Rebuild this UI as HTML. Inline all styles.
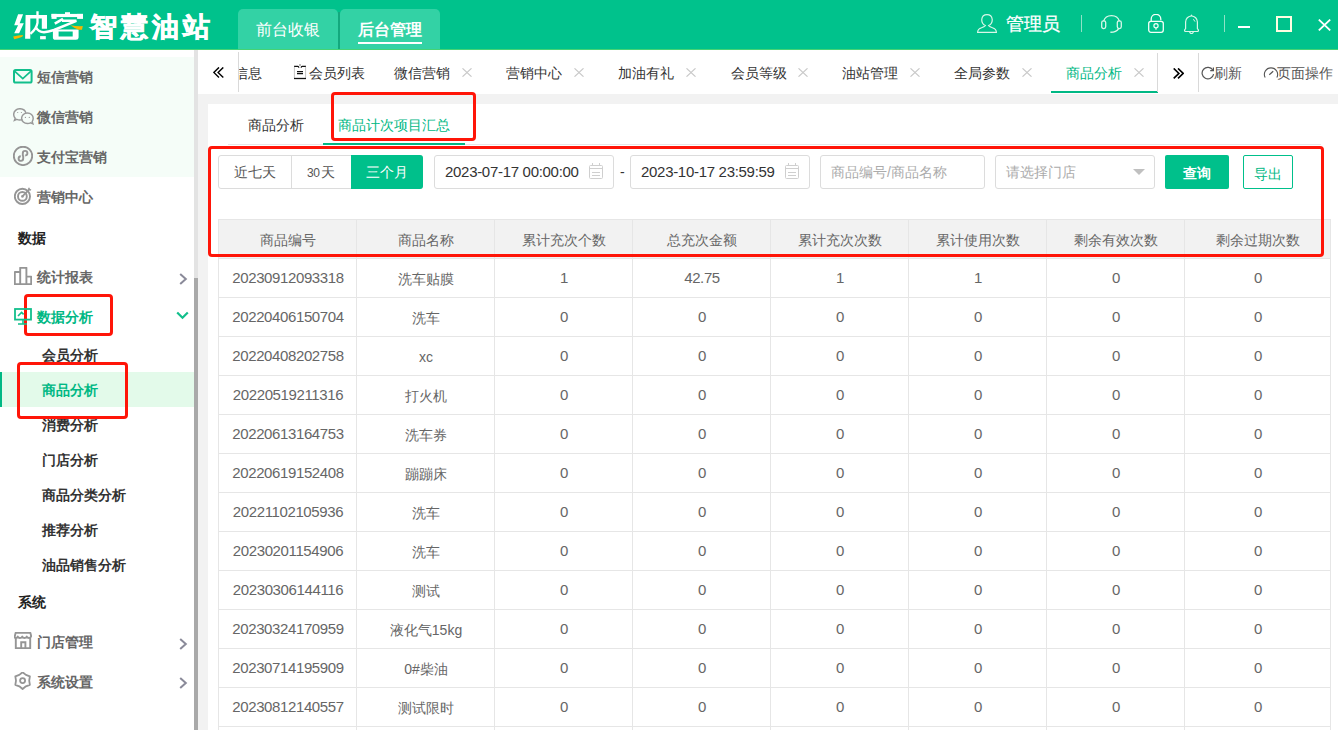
<!DOCTYPE html>
<html><head><meta charset="utf-8">
<style>
*{margin:0;padding:0;box-sizing:border-box}
html,body{width:1338px;height:730px;overflow:hidden;background:#fff;font-family:"Liberation Sans",sans-serif;font-size:14px;color:#333}
.a{position:absolute;white-space:nowrap}
#hdr{position:absolute;left:0;top:0;width:1338px;height:50px;background:#00C28C;border-bottom:1px solid #45D374}
.htab{position:absolute;top:9px;height:40px;background:#33D2A5;border-radius:5px 5px 0 0;color:#fff;font-size:16px;text-align:center;line-height:42px}
#side{position:absolute;left:0;top:50px;width:194px;height:680px;background:#fff}
.si{position:absolute;left:37px;font-size:14px;font-weight:bold;color:#666;line-height:16px}
.ss{position:absolute;left:42px;font-size:14px;font-weight:bold;color:#333;line-height:16px}
.sh{position:absolute;left:18px;font-size:14px;font-weight:bold;color:#222;line-height:16px}
.ic{position:absolute}
#tabs{position:absolute;left:198px;top:50px;width:1140px;height:44px;background:#fff}
.tt{position:absolute;top:15px;font-size:14px;color:#333;line-height:16px}
.tx{position:absolute;top:67px;width:10px;height:10px}
.red{position:absolute;border:3px solid #FF1508;border-radius:4px}
.cell{position:absolute;text-align:center;color:#666;font-size:14px;line-height:16px}
.num{font-size:15px;letter-spacing:-0.38px}
</style></head><body>

<!-- HEADER -->
<div id="hdr">
  <svg class="a" style="left:0;top:0" width="90" height="48" viewBox="0 0 90 48">
  <path d="M18.1 14.2 L23.1 14.2 L19.6 23.3 L23.8 23.3 L19.1 33.2 L14.2 33.2 L18.1 25.2 L14.2 25.2 Z" fill="#fff"/>
  <path d="M13.2 36.4 Q18 35.2 23.1 35.1 L22.3 36.8 Q18 38.6 14.2 39.2 Z" fill="#F7B500"/>
  <path d="M25.6 14.9 H47 V28.7 H41.8 V18.4 H30.3 V38.8 H25.1 Z" fill="#fff"/>
  <path d="M37.5 11.2 V22.8 Q36.5 29 30.4 33.8" fill="none" stroke="#fff" stroke-width="2.3"/>
  <path d="M36 27.5 Q38.5 32.2 44 32.2 Q48 32 54 30 L76.4 20.8 H62" fill="none" stroke="#fff" stroke-width="2.5"/>
  <rect x="40.1" y="36.1" width="5.7" height="3.2" fill="#fff"/>
  <rect x="51.5" y="13.9" width="31.5" height="3.2" fill="#fff"/>
  <rect x="51.5" y="13.9" width="5.1" height="5" fill="#fff"/>
  <rect x="77.1" y="13.9" width="5.9" height="5" fill="#fff"/>
  <rect x="65" y="12.2" width="5" height="2.2" fill="#fff"/>
  <path d="M54.8 23.6 L63 18.8" stroke="#fff" stroke-width="2.6"/>
  <path d="M52.9 29.6 H78.6 V37.5 Q78.6 39.8 76 39.8 H55.5 Q52.9 39.8 52.9 37.5 Z M58.6 31.4 V36.6 H72.7 V31.4 Z" fill="#fff" fill-rule="evenodd"/>
  <path d="M70.4 25.3 Q76 26.4 82.8 26.1 L82 29.8 L78.6 29.8 Q74 28 70.4 25.3 Z" fill="#F7B500"/>
</svg>
  <div class="a" style="left:90px;top:9px;font-size:27px;font-weight:900;color:#fff;line-height:36px;letter-spacing:4px;-webkit-text-stroke:0.7px #fff">智慧油站</div>
  <div class="htab" style="left:238px;width:100px">前台收银</div>
  <div class="a" style="left:338px;top:12px;width:2px;height:37px;background:#13A97E"></div>
  <div class="htab" style="left:340px;width:100px;font-weight:bold">后台管理</div>
  <div class="a" style="left:358px;top:42px;width:64px;height:2px;background:#fff"></div>
</div>


<!-- SIDEBAR -->
<div id="side">
  <div class="a" style="left:0;top:7px;width:194px;height:120px;background:#F5FDF8"></div>
  <div class="a" style="left:0;top:322px;width:194px;height:35px;background:#E3FAEA"></div>
  <div class="a" style="left:0;top:322px;width:2px;height:35px;background:#00B884"></div>
</div>
<div class="a" style="left:194px;top:50px;width:4px;height:680px;background:#E3E3E3"></div>
<div class="a" style="left:194px;top:278px;width:4px;height:452px;background:#A9A9A9"></div>
<div class="si" style="top:69px">短信营销</div>
<div class="si" style="top:109px">微信营销</div>
<div class="si" style="top:149px">支付宝营销</div>
<div class="si" style="top:189px">营销中心</div>
<div class="sh" style="top:230px">数据</div>
<div class="si" style="top:269px">统计报表</div>
<div class="si" style="top:309px;color:#00B884">数据分析</div>
<div class="ss" style="top:347px">会员分析</div>
<div class="ss" style="top:382px;color:#00B884">商品分析</div>
<div class="ss" style="top:417px">消费分析</div>
<div class="ss" style="top:452px">门店分析</div>
<div class="ss" style="top:487px">商品分类分析</div>
<div class="ss" style="top:522px">推荐分析</div>
<div class="ss" style="top:557px">油品销售分析</div>
<div class="sh" style="top:594px">系统</div>
<div class="si" style="top:634px">门店管理</div>
<div class="si" style="top:674px">系统设置</div>
<div class="red" style="left:24px;top:294px;width:89px;height:42px"></div>
<div class="red" style="left:17px;top:362px;width:111px;height:57px"></div>

<!-- TABS BAR -->
<div class="a" style="left:198px;top:94px;width:1140px;height:636px;background:#F2F2F2"></div>
<div class="a" style="left:208px;top:104px;width:1130px;height:626px;background:#fff"></div>
<div class="a" style="left:238px;top:52px;width:1px;height:40px;background:#D9D9D9"></div>
<div class="a" style="left:239px;top:50px;width:918px;height:44px;overflow:hidden">
  <div class="tt" style="left:-5px">信息</div>
  <div class="tt" style="left:70px">会员列表</div>
  <div class="tt" style="left:155px">微信营销</div>
  <div class="tt" style="left:267px">营销中心</div>
  <div class="tt" style="left:379px">加油有礼</div>
  <div class="tt" style="left:492px">会员等级</div>
  <div class="tt" style="left:603px">油站管理</div>
  <div class="tt" style="left:715px">全局参数</div>
  <div class="tt" style="left:827px;color:#00B884">商品分析</div>
</div>
<div class="a" style="left:1051px;top:91px;width:107px;height:2px;background:#00B884"></div>
<div class="a" style="left:1157px;top:53px;width:1px;height:39px;background:#D9D9D9"></div>
<div class="a" style="left:1198px;top:53px;width:1px;height:39px;background:#D9D9D9"></div>
<div class="a" style="left:1214px;top:65px;font-size:14px;line-height:16px;color:#555">刷新</div>
<div class="a" style="left:1277px;top:65px;font-size:14px;line-height:16px;color:#555">页面操作</div>

<!-- SUBTABS -->
<div class="a" style="left:228px;top:144px;width:1093px;height:1px;background:#E6E6E6"></div>
<div class="a" style="left:248px;top:117px;font-size:14px;line-height:16px;color:#333">商品分析</div>
<div class="a" style="left:338px;top:117px;font-size:14px;line-height:16px;color:#00B884">商品计次项目汇总</div>
<div class="a" style="left:323px;top:143px;width:142px;height:2px;background:#00B884"></div>
<div class="red" style="left:331px;top:92px;width:145px;height:49px"></div>


<!-- FILTER -->
<div class="a" style="left:218px;top:155px;width:205px;height:34px;border:1px solid #DCDCDC;border-radius:3px;background:#fff"></div>
<div class="a" style="left:291px;top:156px;width:1px;height:32px;background:#DCDCDC"></div>
<div class="a" style="left:351px;top:155px;width:72px;height:34px;background:#00C08B;border-radius:0 3px 3px 0"></div>
<div class="a" style="left:234px;top:164px;font-size:14px;line-height:16px;color:#555">近七天</div>
<div class="a" style="left:307px;top:164px;font-size:14px;line-height:16px;color:#555"><span style="font-size:12px;letter-spacing:-0.5px;margin-right:1.5px">30</span>天</div>
<div class="a" style="left:366px;top:164px;font-size:14px;line-height:16px;color:#fff">三个月</div>
<div class="a" style="left:434px;top:155px;width:180px;height:34px;border:1px solid #DCDCDC;border-radius:3px"></div>
<div class="a" style="left:445px;top:164px;font-size:15px;letter-spacing:-0.3px;line-height:16px;color:#333">2023-07-17 00:00:00</div>
<div class="a" style="left:589px;top:163px"><svg width="14" height="16" viewBox="0 0 14 16"><rect x="0.5" y="2.5" width="13" height="13" rx="1" fill="none" stroke="#CFCFCF"/><line x1="0.5" y1="5.5" x2="13.5" y2="5.5" stroke="#CFCFCF"/><line x1="3.5" y1="0" x2="3.5" y2="3" stroke="#CFCFCF"/><line x1="10.5" y1="0" x2="10.5" y2="3" stroke="#CFCFCF"/><line x1="3" y1="9.5" x2="11" y2="9.5" stroke="#CFCFCF"/><line x1="3" y1="12.5" x2="11" y2="12.5" stroke="#CFCFCF"/></svg></div>
<div class="a" style="left:620px;top:164px;font-size:14px;line-height:16px;color:#333">-</div>
<div class="a" style="left:630px;top:155px;width:180px;height:34px;border:1px solid #DCDCDC;border-radius:3px"></div>
<div class="a" style="left:641px;top:164px;font-size:15px;letter-spacing:-0.3px;line-height:16px;color:#333">2023-10-17 23:59:59</div>
<div class="a" style="left:785px;top:163px"><svg width="14" height="16" viewBox="0 0 14 16"><rect x="0.5" y="2.5" width="13" height="13" rx="1" fill="none" stroke="#CFCFCF"/><line x1="0.5" y1="5.5" x2="13.5" y2="5.5" stroke="#CFCFCF"/><line x1="3.5" y1="0" x2="3.5" y2="3" stroke="#CFCFCF"/><line x1="10.5" y1="0" x2="10.5" y2="3" stroke="#CFCFCF"/><line x1="3" y1="9.5" x2="11" y2="9.5" stroke="#CFCFCF"/><line x1="3" y1="12.5" x2="11" y2="12.5" stroke="#CFCFCF"/></svg></div>
<div class="a" style="left:820px;top:155px;width:165px;height:34px;border:1px solid #DCDCDC;border-radius:3px"></div>
<div class="a" style="left:831px;top:164px;font-size:14px;line-height:16px;color:#ABABAB">商品编号/商品名称</div>
<div class="a" style="left:995px;top:155px;width:160px;height:34px;border:1px solid #DCDCDC;border-radius:3px"></div>
<div class="a" style="left:1006px;top:164px;font-size:14px;line-height:16px;color:#ABABAB">请选择门店</div>
<svg class="a" style="left:1133px;top:169px" width="12" height="6" viewBox="0 0 12 6"><path d="M0 0 L12 0 L6 6 Z" fill="#C0C0C0"/></svg>
<div class="a" style="left:1165px;top:155px;width:64px;height:34px;background:#00C08B;border-radius:2px;color:#fff;font-weight:bold;text-align:center;line-height:36px;font-size:14px">查询</div>
<div class="a" style="left:1243px;top:155px;width:50px;height:34px;border:1px solid #00C08B;border-radius:2px;color:#00B884;text-align:center;line-height:33px;font-size:14px;padding-top:2px">导出</div>
<!-- TABLE -->
<div class="a" style="left:218px;top:219px;width:1112px;height:39px;background:#F2F2F2"></div>
<div class="a" style="left:218px;top:219px;width:1113px;height:1px;background:#E6E6E6"></div>
<div class="a" style="left:218px;top:258px;width:1113px;height:1px;background:#E6E6E6"></div>
<div class="a" style="left:218px;top:297px;width:1113px;height:1px;background:#E6E6E6"></div>
<div class="a" style="left:218px;top:336px;width:1113px;height:1px;background:#E6E6E6"></div>
<div class="a" style="left:218px;top:375px;width:1113px;height:1px;background:#E6E6E6"></div>
<div class="a" style="left:218px;top:414px;width:1113px;height:1px;background:#E6E6E6"></div>
<div class="a" style="left:218px;top:453px;width:1113px;height:1px;background:#E6E6E6"></div>
<div class="a" style="left:218px;top:492px;width:1113px;height:1px;background:#E6E6E6"></div>
<div class="a" style="left:218px;top:531px;width:1113px;height:1px;background:#E6E6E6"></div>
<div class="a" style="left:218px;top:570px;width:1113px;height:1px;background:#E6E6E6"></div>
<div class="a" style="left:218px;top:609px;width:1113px;height:1px;background:#E6E6E6"></div>
<div class="a" style="left:218px;top:648px;width:1113px;height:1px;background:#E6E6E6"></div>
<div class="a" style="left:218px;top:687px;width:1113px;height:1px;background:#E6E6E6"></div>
<div class="a" style="left:218px;top:726px;width:1113px;height:1px;background:#E6E6E6"></div>
<div class="a" style="left:218px;top:219px;width:1px;height:511px;background:#E6E6E6"></div>
<div class="a" style="left:356px;top:219px;width:1px;height:511px;background:#E6E6E6"></div>
<div class="a" style="left:494px;top:219px;width:1px;height:511px;background:#E6E6E6"></div>
<div class="a" style="left:632px;top:219px;width:1px;height:511px;background:#E6E6E6"></div>
<div class="a" style="left:770px;top:219px;width:1px;height:511px;background:#E6E6E6"></div>
<div class="a" style="left:908px;top:219px;width:1px;height:511px;background:#E6E6E6"></div>
<div class="a" style="left:1046px;top:219px;width:1px;height:511px;background:#E6E6E6"></div>
<div class="a" style="left:1184px;top:219px;width:1px;height:511px;background:#E6E6E6"></div>
<div class="a" style="left:1330px;top:219px;width:1px;height:511px;background:#E6E6E6"></div>
<div class="cell" style="left:219px;top:232px;width:138px">商品编号</div>
<div class="cell" style="left:357px;top:232px;width:138px">商品名称</div>
<div class="cell" style="left:495px;top:232px;width:138px">累计充次个数</div>
<div class="cell" style="left:633px;top:232px;width:138px">总充次金额</div>
<div class="cell" style="left:771px;top:232px;width:138px">累计充次次数</div>
<div class="cell" style="left:909px;top:232px;width:138px">累计使用次数</div>
<div class="cell" style="left:1047px;top:232px;width:138px">剩余有效次数</div>
<div class="cell" style="left:1185px;top:232px;width:146px">剩余过期次数</div>
<div class="cell num" style="left:219px;top:270px;width:138px">20230912093318</div>
<div class="cell" style="left:357px;top:271px;width:138px">洗车贴膜</div>
<div class="cell num" style="left:495px;top:270px;width:138px">1</div>
<div class="cell num" style="left:633px;top:270px;width:138px">42.75</div>
<div class="cell num" style="left:771px;top:270px;width:138px">1</div>
<div class="cell num" style="left:909px;top:270px;width:138px">1</div>
<div class="cell num" style="left:1047px;top:270px;width:138px">0</div>
<div class="cell num" style="left:1185px;top:270px;width:146px">0</div>
<div class="cell num" style="left:219px;top:309px;width:138px">20220406150704</div>
<div class="cell" style="left:357px;top:310px;width:138px">洗车</div>
<div class="cell num" style="left:495px;top:309px;width:138px">0</div>
<div class="cell num" style="left:633px;top:309px;width:138px">0</div>
<div class="cell num" style="left:771px;top:309px;width:138px">0</div>
<div class="cell num" style="left:909px;top:309px;width:138px">0</div>
<div class="cell num" style="left:1047px;top:309px;width:138px">0</div>
<div class="cell num" style="left:1185px;top:309px;width:146px">0</div>
<div class="cell num" style="left:219px;top:348px;width:138px">20220408202758</div>
<div class="cell" style="left:357px;top:349px;width:138px">xc</div>
<div class="cell num" style="left:495px;top:348px;width:138px">0</div>
<div class="cell num" style="left:633px;top:348px;width:138px">0</div>
<div class="cell num" style="left:771px;top:348px;width:138px">0</div>
<div class="cell num" style="left:909px;top:348px;width:138px">0</div>
<div class="cell num" style="left:1047px;top:348px;width:138px">0</div>
<div class="cell num" style="left:1185px;top:348px;width:146px">0</div>
<div class="cell num" style="left:219px;top:387px;width:138px">20220519211316</div>
<div class="cell" style="left:357px;top:388px;width:138px">打火机</div>
<div class="cell num" style="left:495px;top:387px;width:138px">0</div>
<div class="cell num" style="left:633px;top:387px;width:138px">0</div>
<div class="cell num" style="left:771px;top:387px;width:138px">0</div>
<div class="cell num" style="left:909px;top:387px;width:138px">0</div>
<div class="cell num" style="left:1047px;top:387px;width:138px">0</div>
<div class="cell num" style="left:1185px;top:387px;width:146px">0</div>
<div class="cell num" style="left:219px;top:426px;width:138px">20220613164753</div>
<div class="cell" style="left:357px;top:427px;width:138px">洗车券</div>
<div class="cell num" style="left:495px;top:426px;width:138px">0</div>
<div class="cell num" style="left:633px;top:426px;width:138px">0</div>
<div class="cell num" style="left:771px;top:426px;width:138px">0</div>
<div class="cell num" style="left:909px;top:426px;width:138px">0</div>
<div class="cell num" style="left:1047px;top:426px;width:138px">0</div>
<div class="cell num" style="left:1185px;top:426px;width:146px">0</div>
<div class="cell num" style="left:219px;top:465px;width:138px">20220619152408</div>
<div class="cell" style="left:357px;top:466px;width:138px">蹦蹦床</div>
<div class="cell num" style="left:495px;top:465px;width:138px">0</div>
<div class="cell num" style="left:633px;top:465px;width:138px">0</div>
<div class="cell num" style="left:771px;top:465px;width:138px">0</div>
<div class="cell num" style="left:909px;top:465px;width:138px">0</div>
<div class="cell num" style="left:1047px;top:465px;width:138px">0</div>
<div class="cell num" style="left:1185px;top:465px;width:146px">0</div>
<div class="cell num" style="left:219px;top:504px;width:138px">20221102105936</div>
<div class="cell" style="left:357px;top:505px;width:138px">洗车</div>
<div class="cell num" style="left:495px;top:504px;width:138px">0</div>
<div class="cell num" style="left:633px;top:504px;width:138px">0</div>
<div class="cell num" style="left:771px;top:504px;width:138px">0</div>
<div class="cell num" style="left:909px;top:504px;width:138px">0</div>
<div class="cell num" style="left:1047px;top:504px;width:138px">0</div>
<div class="cell num" style="left:1185px;top:504px;width:146px">0</div>
<div class="cell num" style="left:219px;top:543px;width:138px">20230201154906</div>
<div class="cell" style="left:357px;top:544px;width:138px">洗车</div>
<div class="cell num" style="left:495px;top:543px;width:138px">0</div>
<div class="cell num" style="left:633px;top:543px;width:138px">0</div>
<div class="cell num" style="left:771px;top:543px;width:138px">0</div>
<div class="cell num" style="left:909px;top:543px;width:138px">0</div>
<div class="cell num" style="left:1047px;top:543px;width:138px">0</div>
<div class="cell num" style="left:1185px;top:543px;width:146px">0</div>
<div class="cell num" style="left:219px;top:582px;width:138px">20230306144116</div>
<div class="cell" style="left:357px;top:583px;width:138px">测试</div>
<div class="cell num" style="left:495px;top:582px;width:138px">0</div>
<div class="cell num" style="left:633px;top:582px;width:138px">0</div>
<div class="cell num" style="left:771px;top:582px;width:138px">0</div>
<div class="cell num" style="left:909px;top:582px;width:138px">0</div>
<div class="cell num" style="left:1047px;top:582px;width:138px">0</div>
<div class="cell num" style="left:1185px;top:582px;width:146px">0</div>
<div class="cell num" style="left:219px;top:621px;width:138px">20230324170959</div>
<div class="cell" style="left:357px;top:622px;width:138px">液化气15kg</div>
<div class="cell num" style="left:495px;top:621px;width:138px">0</div>
<div class="cell num" style="left:633px;top:621px;width:138px">0</div>
<div class="cell num" style="left:771px;top:621px;width:138px">0</div>
<div class="cell num" style="left:909px;top:621px;width:138px">0</div>
<div class="cell num" style="left:1047px;top:621px;width:138px">0</div>
<div class="cell num" style="left:1185px;top:621px;width:146px">0</div>
<div class="cell num" style="left:219px;top:660px;width:138px">20230714195909</div>
<div class="cell" style="left:357px;top:661px;width:138px">0#柴油</div>
<div class="cell num" style="left:495px;top:660px;width:138px">0</div>
<div class="cell num" style="left:633px;top:660px;width:138px">0</div>
<div class="cell num" style="left:771px;top:660px;width:138px">0</div>
<div class="cell num" style="left:909px;top:660px;width:138px">0</div>
<div class="cell num" style="left:1047px;top:660px;width:138px">0</div>
<div class="cell num" style="left:1185px;top:660px;width:146px">0</div>
<div class="cell num" style="left:219px;top:699px;width:138px">20230812140557</div>
<div class="cell" style="left:357px;top:700px;width:138px">测试限时</div>
<div class="cell num" style="left:495px;top:699px;width:138px">0</div>
<div class="cell num" style="left:633px;top:699px;width:138px">0</div>
<div class="cell num" style="left:771px;top:699px;width:138px">0</div>
<div class="cell num" style="left:909px;top:699px;width:138px">0</div>
<div class="cell num" style="left:1047px;top:699px;width:138px">0</div>
<div class="cell num" style="left:1185px;top:699px;width:146px">0</div>
<div class="red" style="left:208px;top:146px;width:1116px;height:111px"></div>

<!-- HEADER ICONS -->
<svg class="a" style="left:977px;top:14px" width="20" height="19" viewBox="0 0 20 19"><path d="M8.3 11.6 C5.5 10 4.6 7.5 4.8 5.2 C5.1 2.3 7.4 0.6 10 0.6 C12.6 0.6 14.9 2.3 15.2 5.2 C15.4 7.5 14.5 10 11.7 11.6 C12.6 12.7 13.8 13.2 15.4 13.7 C18 14.5 19.4 16.3 19.4 18.4 L0.6 18.4 C0.6 16.3 2 14.5 4.6 13.7 C6.2 13.2 7.4 12.7 8.3 11.6 Z" fill="none" stroke="#D8F7E8" stroke-width="1.2"/></svg>
<div class="a" style="left:1006px;top:13px;font-size:18px;line-height:22px;color:#fff;-webkit-text-stroke:0.3px #fff">管理员</div>
<div class="a" style="left:1081px;top:15px;width:1px;height:17px;background:#8FE2C6"></div>
<svg class="a" style="left:1101px;top:14px" width="21" height="19" viewBox="0 0 21 19"><path d="M2.6 7.2 A8.2 7.6 0 0 1 18.4 7.2" fill="none" stroke="#D8F7E8" stroke-width="1.3"/><rect x="0.7" y="6.8" width="4" height="7.8" rx="1.8" fill="none" stroke="#D8F7E8" stroke-width="1.3"/><rect x="16.3" y="6.8" width="4" height="7.8" rx="1.8" fill="none" stroke="#D8F7E8" stroke-width="1.3"/><path d="M17.6 14.6 Q15.5 18.3 9.4 18.3" fill="none" stroke="#D8F7E8" stroke-width="1.4"/></svg>
<svg class="a" style="left:1148px;top:14px" width="16" height="19" viewBox="0 0 16 19"><rect x="0.7" y="7.4" width="14.6" height="10.9" rx="2.2" fill="none" stroke="#F4FFF8" stroke-width="1.3"/><path d="M3.2 7.4 V4.9 A4.8 4.6 0 0 1 12.8 4.9 V6.2" fill="none" stroke="#F4FFF8" stroke-width="1.3"/><circle cx="8" cy="11.7" r="2.1" fill="none" stroke="#F4FFF8" stroke-width="1.2"/><path d="M8 13.8 V15.8" stroke="#F4FFF8" stroke-width="1.2"/></svg>
<svg class="a" style="left:1184px;top:14px" width="15" height="20" viewBox="0 0 15 20"><path d="M7.5 0.3 L8.6 2 L6.4 2 Z" fill="#D8F7E8"/><path d="M1.6 14.5 V8 A5.9 6 0 0 1 13.4 8 V14.5 L14.4 16 Q14.6 17.5 13.2 17.5 L1.8 17.5 Q0.4 17.5 0.6 16 Z" fill="none" stroke="#D8F7E8" stroke-width="1.2"/><path d="M5.6 17.6 A1.9 1.9 0 0 0 9.4 17.6" fill="none" stroke="#D8F7E8" stroke-width="1.2"/><path d="M9.4 5.2 L11 7.6" stroke="#D8F7E8" stroke-width="1"/></svg>
<div class="a" style="left:1224px;top:15px;width:1px;height:17px;background:#8FE2C6"></div>
<div class="a" style="left:1238px;top:26px;width:12px;height:2px;background:#fff"></div>
<div class="a" style="left:1276px;top:16px;width:16px;height:16px;border:2px solid #FFFDE2"></div>
<svg class="a" style="left:1318px;top:19px" width="13" height="12" viewBox="0 0 13 12"><path d="M0.8 0.6 L12.2 11.4 M12.2 0.6 L0.8 11.4" stroke="#fff" stroke-width="1.8"/></svg>

<!-- TAB ICONS -->
<svg class="a" style="left:213px;top:67px" width="11" height="11" viewBox="0 0 11 11"><path d="M6 0.4 L0.8 5.4 L6 10.4 M10.3 0.4 L5.1 5.4 L10.3 10.4" fill="none" stroke="#000" stroke-width="1.4"/></svg>
<svg class="a" style="left:1173px;top:68px" width="11" height="11" viewBox="0 0 11 11"><path d="M0.7 0.4 L5.9 5.4 L0.7 10.4 M5 0.4 L10.2 5.4 L5 10.4" fill="none" stroke="#000" stroke-width="1.6"/></svg>
<svg class="a" style="left:293px;top:64px" width="14" height="16" viewBox="0 0 14 16"><path d="M1 2.3 H4.8 Q5.8 2.3 5.8 3.8 M8.2 3.8 Q8.2 2.3 9.2 2.3 H13" fill="none" stroke="#111" stroke-width="1.2"/><path d="M6.2 1 H7.8" stroke="#444" stroke-width="0.9"/><path d="M1.4 2.8 V14 M12.6 2.8 V14" stroke="#C4C4C4" stroke-width="1"/><path d="M1 14.5 H13" stroke="#111" stroke-width="1.3"/><path d="M4 7.6 H10 M4 9.6 H10" stroke="#111" stroke-width="1.1"/></svg>
<svg class="a" style="left:462px;top:68px" width="10" height="9" viewBox="0 0 10 9"><path d="M0.5 0.3 L9.5 8.7 M9.5 0.3 L0.5 8.7" stroke="#C8C8C8" stroke-width="1.1"/></svg>
<svg class="a" style="left:574px;top:68px" width="10" height="9" viewBox="0 0 10 9"><path d="M0.5 0.3 L9.5 8.7 M9.5 0.3 L0.5 8.7" stroke="#C8C8C8" stroke-width="1.1"/></svg>
<svg class="a" style="left:686px;top:68px" width="10" height="9" viewBox="0 0 10 9"><path d="M0.5 0.3 L9.5 8.7 M9.5 0.3 L0.5 8.7" stroke="#C8C8C8" stroke-width="1.1"/></svg>
<svg class="a" style="left:798px;top:68px" width="10" height="9" viewBox="0 0 10 9"><path d="M0.5 0.3 L9.5 8.7 M9.5 0.3 L0.5 8.7" stroke="#C8C8C8" stroke-width="1.1"/></svg>
<svg class="a" style="left:910px;top:68px" width="10" height="9" viewBox="0 0 10 9"><path d="M0.5 0.3 L9.5 8.7 M9.5 0.3 L0.5 8.7" stroke="#C8C8C8" stroke-width="1.1"/></svg>
<svg class="a" style="left:1022px;top:68px" width="10" height="9" viewBox="0 0 10 9"><path d="M0.5 0.3 L9.5 8.7 M9.5 0.3 L0.5 8.7" stroke="#C8C8C8" stroke-width="1.1"/></svg>
<svg class="a" style="left:1134px;top:68px" width="10" height="9" viewBox="0 0 10 9"><path d="M0.5 0.3 L9.5 8.7 M9.5 0.3 L0.5 8.7" stroke="#C8C8C8" stroke-width="1.1"/></svg>

<svg class="a" style="left:1201px;top:66px" width="14" height="14" viewBox="0 0 14 14"><path d="M11.8 4 A5.8 5.8 0 1 0 12.6 8.2" fill="none" stroke="#555" stroke-width="1.2"/><path d="M12.4 1.4 V4.6 H9.2" fill="none" stroke="#555" stroke-width="1.2"/></svg>
<svg class="a" style="left:1263px;top:66px" width="16" height="13" viewBox="0 0 16 13"><path d="M2.2 11.6 A6.6 6.6 0 1 1 13.8 11.6" fill="none" stroke="#555" stroke-width="1.1"/><path d="M6.3 8.8 L10.2 5.2" stroke="#555" stroke-width="1.2"/></svg>

<!-- SIDEBAR ICONS -->
<svg class="a" style="left:13px;top:69px" width="20" height="15" viewBox="0 0 20 15"><rect x="1" y="1" width="17.6" height="12.6" rx="1.6" fill="none" stroke="#12BF8C" stroke-width="2"/><path d="M1.6 2.2 L9.8 9.6 L18 2.2" fill="none" stroke="#12BF8C" stroke-width="1.7"/></svg>
<svg class="a" style="left:13px;top:108px" width="21" height="17" viewBox="0 0 21 17"><path d="M9.5 11.6 Q8.2 12 6.8 12 Q5.2 12 3.8 11.4 L1.4 12.4 L2.2 10.2 Q0.7 8.6 0.7 6.4 C0.7 3.2 3.5 0.7 6.9 0.7 C9.8 0.7 12.2 2.5 12.9 4.9" fill="none" stroke="#999" stroke-width="1.45"/><path d="M19.2 13.6 L19.9 15.8 L17.6 14.8 Q16.2 15.5 14.4 15.5 C11.2 15.5 8.6 13.2 8.6 10.2 C8.6 7.2 11.2 4.9 14.4 4.9 C17.6 4.9 20.2 7.2 20.2 10.2 Q20.2 12.1 19.2 13.6 Z" fill="none" stroke="#999" stroke-width="1.45"/><circle cx="4.7" cy="4.5" r="0.6" fill="#999"/><circle cx="8.4" cy="4.5" r="0.6" fill="#999"/><circle cx="12.4" cy="9.4" r="0.6" fill="#999"/><circle cx="16.3" cy="9.4" r="0.6" fill="#999"/></svg>
<svg class="a" style="left:13px;top:146px" width="20" height="20" viewBox="0 0 20 20"><circle cx="10" cy="9.9" r="9.2" fill="none" stroke="#959595" stroke-width="1.9"/><path d="M9.8 10.2 V7.2 A2.3 2.3 0 1 1 12.2 9.5 M10.2 9.6 V12.6 A2.3 2.3 0 1 1 7.8 10.3" fill="none" stroke="#959595" stroke-width="1.9"/></svg>
<svg class="a" style="left:14px;top:187px" width="18" height="18" viewBox="0 0 18 18"><circle cx="8.4" cy="9.4" r="7.6" fill="none" stroke="#959595" stroke-width="1.9"/><circle cx="8.4" cy="9.4" r="4.4" fill="none" stroke="#959595" stroke-width="1.9"/><circle cx="8.4" cy="9.4" r="1.3" fill="#999"/><path d="M8.4 9.4 L15.6 2.2" stroke="#959595" stroke-width="1.8"/><path d="M14.6 0.8 L15.4 2.4 L17 3.2" fill="none" stroke="#999" stroke-width="1.45"/></svg>
<svg class="a" style="left:14px;top:267px" width="18" height="18" viewBox="0 0 18 18"><path d="M0.8 17.2 V5 H6.2 V17.2 Z M6.2 17.2 V0.8 H12.4 V17.2 Z M12.4 17.2 V9.6 H17.2 V17.2 Z" fill="none" stroke="#959595" stroke-width="1.9" stroke-linejoin="round"/></svg>
<svg class="a" style="left:14px;top:308px" width="18" height="17" viewBox="0 0 18 17"><rect x="1" y="1" width="16" height="10.6" fill="none" stroke="#12BF8C" stroke-width="1.8"/><path d="M4 8 L7.6 4.4 L9.6 6.4" fill="none" stroke="#12BF8C" stroke-width="1.6"/><path d="M9 11.6 V16 M4 16 H13" stroke="#12BF8C" stroke-width="1.6"/></svg>
<svg class="a" style="left:14px;top:632px" width="18" height="17" viewBox="0 0 18 17"><path d="M1.6 0.9 H16.4 L17.2 4.2 Q16.6 6 15 6 Q13.3 6 12.7 4.6 Q12 6 10.4 6 Q8.8 6 8.2 4.6 Q7.5 6 5.9 6 Q4.3 6 3.7 4.6 Q3 6 1.6 6 Q0.4 6 0.8 4.2 Z" fill="none" stroke="#959595" stroke-width="1.9" stroke-linejoin="round"/><path d="M1.8 6 V16.2 H16.2 V6" fill="none" stroke="#959595" stroke-width="1.9"/><path d="M7.2 16.2 V10.2 H11.4 V16.2" fill="none" stroke="#959595" stroke-width="1.9"/></svg>
<svg class="a" style="left:14px;top:672px" width="18" height="18" viewBox="0 0 18 18"><path d="M8.60 0.20 L11.90 2.88 L15.87 4.40 L15.20 8.60 L15.87 12.80 L11.90 14.32 L8.60 17.00 L5.30 14.32 L1.33 12.80 L2.00 8.60 L1.33 4.40 L5.30 2.88 Z" fill="none" stroke="#959595" stroke-width="1.8" stroke-linejoin="round"/><circle cx="8.6" cy="8.6" r="2.5" fill="none" stroke="#959595" stroke-width="1.8"/></svg>
<svg class="a" style="left:179px;top:273px" width="9" height="12" viewBox="0 0 9 12"><path d="M1.2 1 L6.8 6 L1.2 11" fill="none" stroke="#8A8A99" stroke-width="2"/></svg>
<svg class="a" style="left:176px;top:311px" width="13" height="9" viewBox="0 0 13 9"><path d="M1.2 1.5 L6.5 6.8 L11.8 1.5" fill="none" stroke="#12BF8C" stroke-width="2.2"/></svg>
<svg class="a" style="left:179px;top:638px" width="9" height="12" viewBox="0 0 9 12"><path d="M1.2 1 L6.8 6 L1.2 11" fill="none" stroke="#8A8A99" stroke-width="2"/></svg>
<svg class="a" style="left:179px;top:677px" width="9" height="12" viewBox="0 0 9 12"><path d="M1.2 1 L6.8 6 L1.2 11" fill="none" stroke="#8A8A99" stroke-width="2"/></svg>

</body></html>
